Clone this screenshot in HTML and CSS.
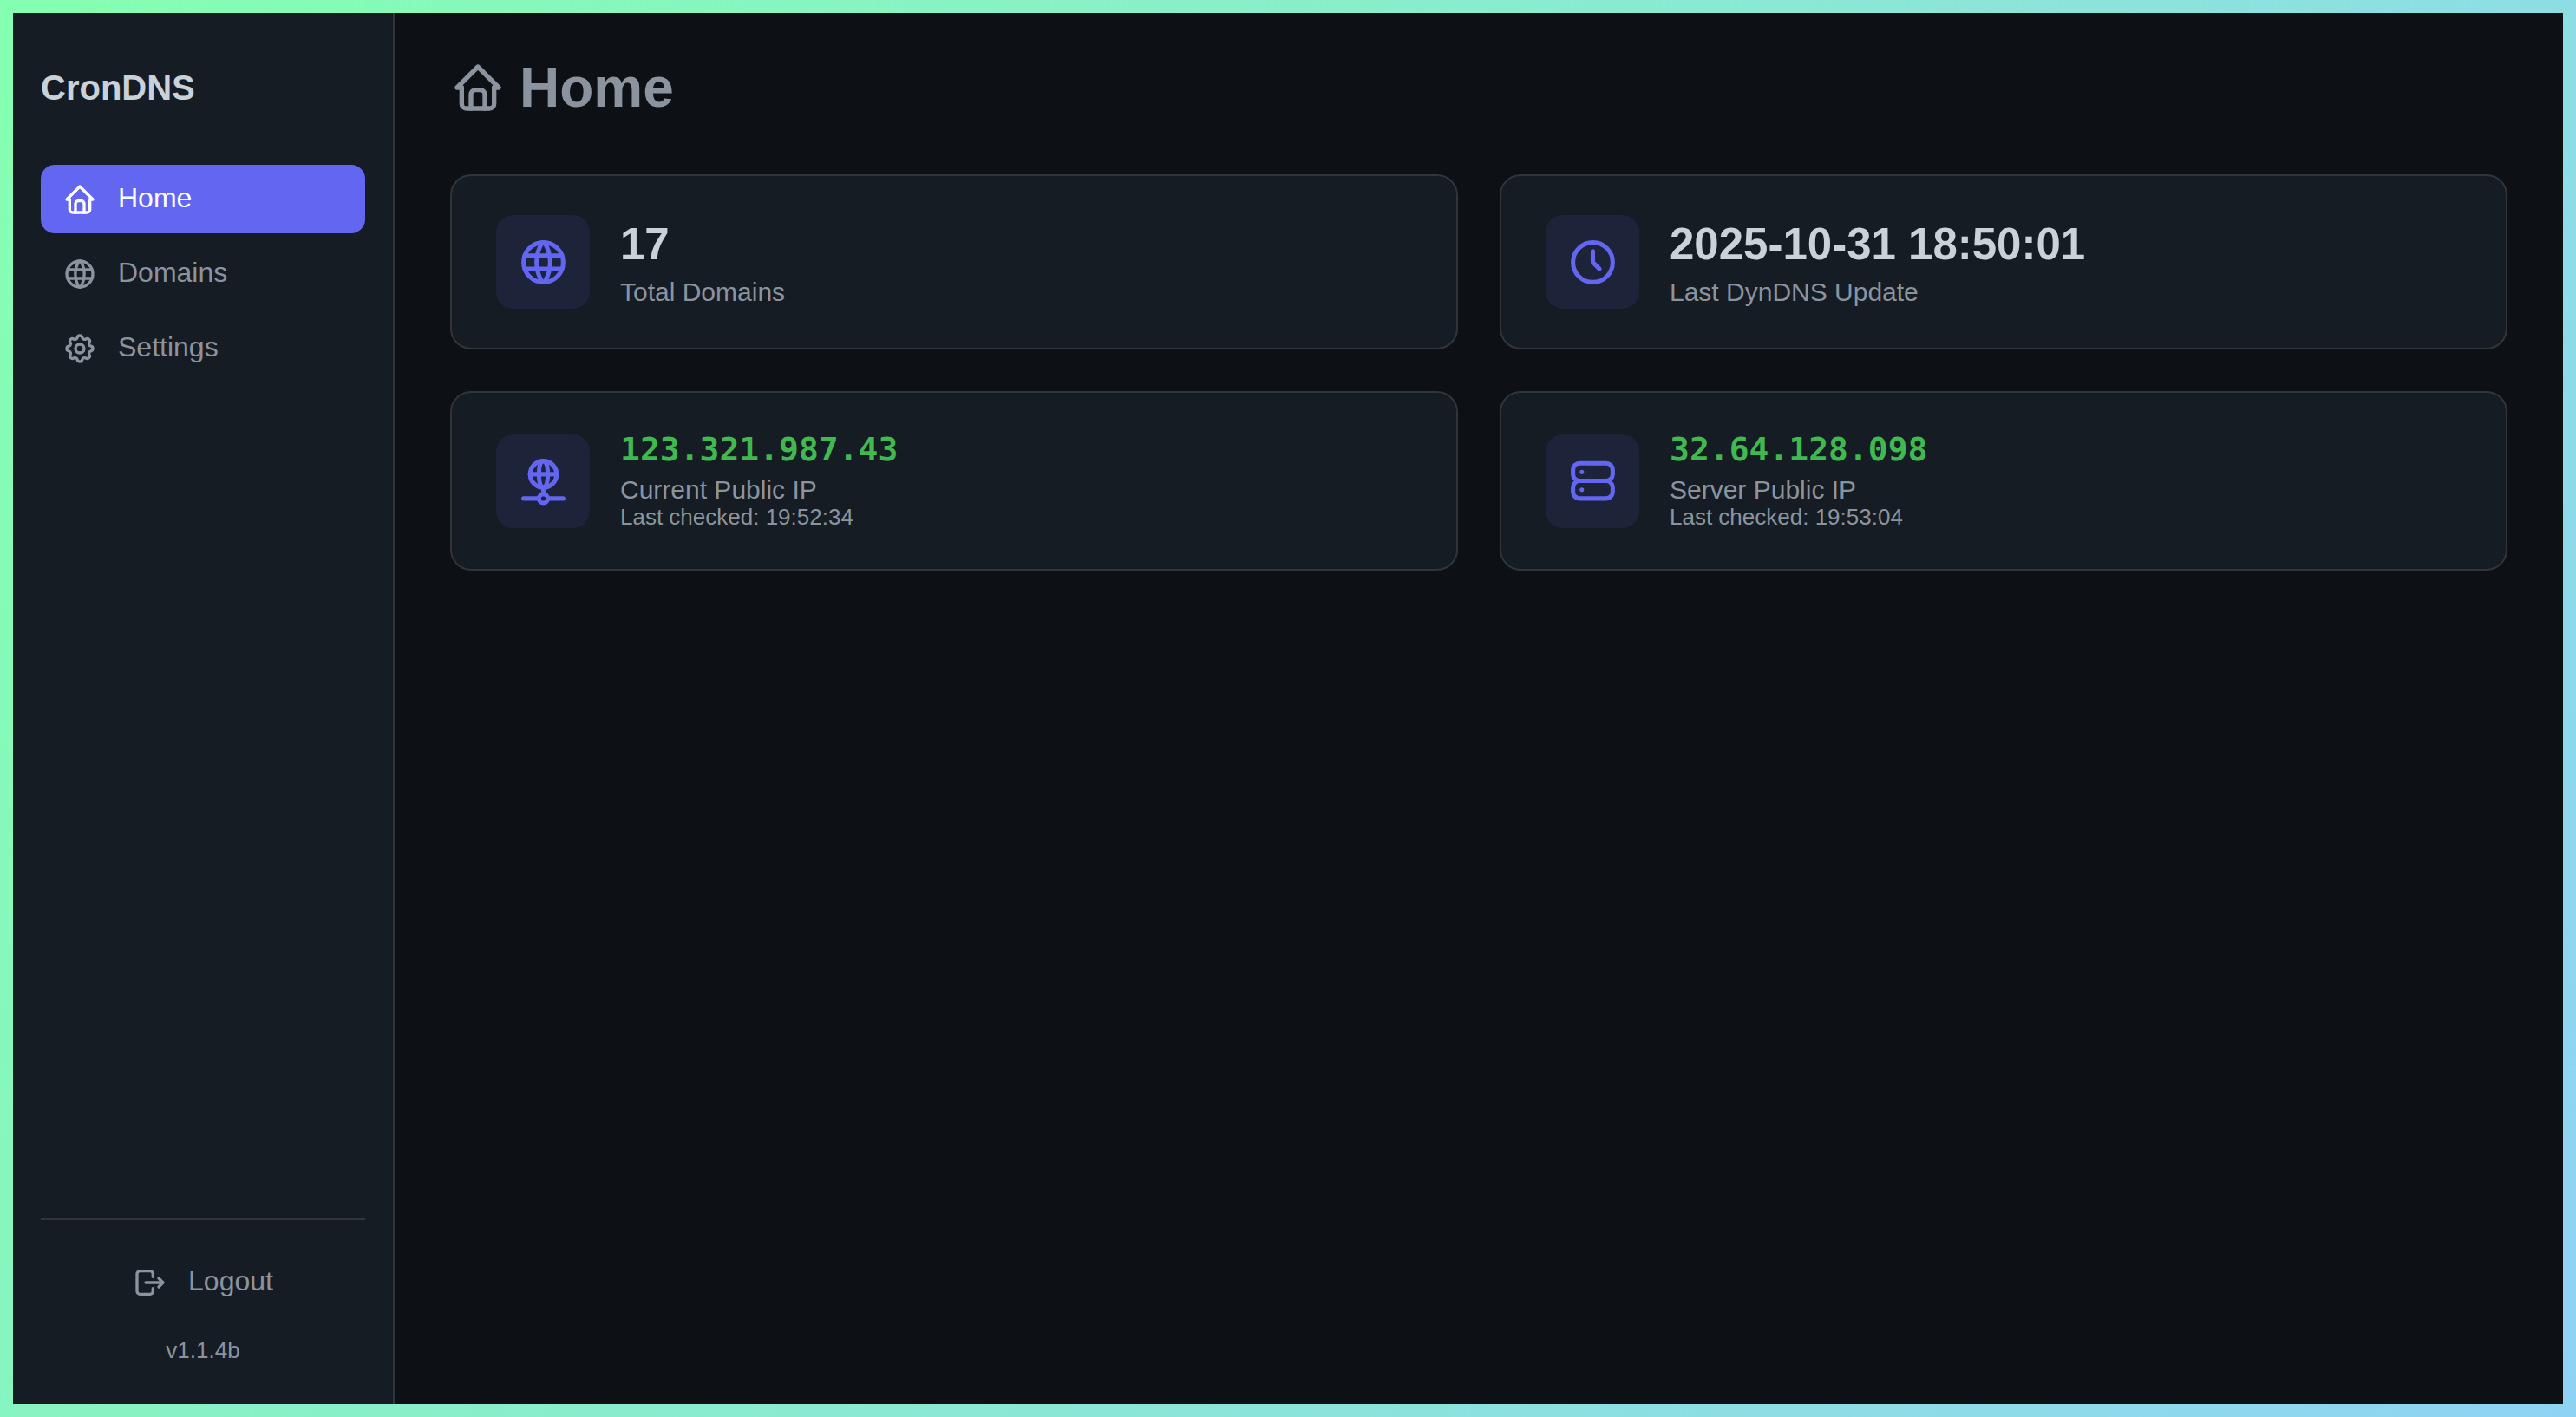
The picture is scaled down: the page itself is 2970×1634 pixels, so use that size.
FILE: index.html
```html
<!DOCTYPE html>
<html lang="en">
<head>
<meta charset="utf-8">
<meta name="viewport" content="width=device-width, initial-scale=1">
<title>CronDNS</title>
<link rel="stylesheet" href="styles.css">
</head>
<body>
<div class="app">
  <aside class="sidebar">
    <div class="brand">CronDNS</div>
    <nav class="nav">
      <a class="nav-link active" href="#home">
        <svg class="icon" viewBox="0 0 24 24" aria-hidden="true"><path d="M5 12H3l9-9 9 9h-2"/><path d="M5 12v7a2 2 0 0 0 2 2h10a2 2 0 0 0 2-2v-7"/><path d="M9 21v-6a2 2 0 0 1 2-2h2a2 2 0 0 1 2 2v6"/></svg>
        <span class="nav-text">Home</span>
      </a>
      <a class="nav-link" href="#domains">
        <svg class="icon" viewBox="0 0 24 24" aria-hidden="true"><circle cx="12" cy="12" r="9"/><path d="M3.6 9h16.8M3.6 15h16.8M11.5 3a17 17 0 0 0 0 18M12.5 3a17 17 0 0 1 0 18"/></svg>
        <span class="nav-text">Domains</span>
      </a>
      <a class="nav-link" href="#settings">
        <svg class="icon" viewBox="0 0 24 24" aria-hidden="true"><path d="M10.325 4.317c.426-1.756 2.924-1.756 3.35 0a1.724 1.724 0 0 0 2.573 1.066c1.543-.94 3.31.826 2.37 2.37a1.724 1.724 0 0 0 1.065 2.572c1.756.426 1.756 2.924 0 3.35a1.724 1.724 0 0 0-1.066 2.573c.94 1.543-.826 3.31-2.37 2.37a1.724 1.724 0 0 0-2.572 1.065c-.426 1.756-2.924 1.756-3.35 0a1.724 1.724 0 0 0-2.573-1.066c-1.543.94-3.31-.826-2.37-2.37a1.724 1.724 0 0 0-1.065-2.572c-1.756-.426-1.756-2.924 0-3.35a1.724 1.724 0 0 0 1.066-2.573c-.94-1.543.826-3.31 2.37-2.37 1 .608 2.296.07 2.572-1.065z"/><circle cx="12" cy="12" r="3"/></svg>
        <span class="nav-text">Settings</span>
      </a>
    </nav>
    <div class="sidebar-footer">
      <a class="nav-link logout" href="#logout">
        <svg class="icon" viewBox="0 0 24 24" aria-hidden="true"><path d="M14 8V6a2 2 0 0 0-2-2H5a2 2 0 0 0-2 2v12a2 2 0 0 0 2 2h7a2 2 0 0 0 2-2v-2"/><path d="M9 12h12l-3-3M18 15l3-3"/></svg>
        <span class="nav-text">Logout</span>
      </a>
      <div class="version">v1.1.4b</div>
    </div>
  </aside>

  <main class="main">
    <h1 class="page-title">
      <svg class="icon icon-title" viewBox="0 0 24 24" aria-hidden="true"><path d="M5 12H3l9-9 9 9h-2"/><path d="M5 12v7a2 2 0 0 0 2 2h10a2 2 0 0 0 2-2v-7"/><path d="M9 21v-6a2 2 0 0 1 2-2h2a2 2 0 0 1 2 2v6"/></svg>
      <span>Home</span>
    </h1>

    <div class="cards">
      <section class="card">
        <div class="tile">
          <svg class="icon icon-tile" viewBox="0 0 24 24" aria-hidden="true"><circle cx="12" cy="12" r="9"/><path d="M3.6 9h16.8M3.6 15h16.8M11.5 3a17 17 0 0 0 0 18M12.5 3a17 17 0 0 1 0 18"/></svg>
        </div>
        <div class="info">
          <div class="value">17</div>
          <div class="label">Total Domains</div>
        </div>
      </section>

      <section class="card">
        <div class="tile">
          <svg class="icon icon-tile" viewBox="0 0 24 24" aria-hidden="true"><circle cx="12" cy="12" r="9"/><path d="M12 7v5l3 3"/></svg>
        </div>
        <div class="info">
          <div class="value">2025-10-31 18:50:01</div>
          <div class="label">Last DynDNS Update</div>
        </div>
      </section>

      <section class="card">
        <div class="tile">
          <svg class="icon icon-tile" viewBox="0 0 24 24" aria-hidden="true"><circle cx="12" cy="9" r="6"/><path d="M12 3c1.333.333 2 2.333 2 6s-.667 5.667-2 6M12 3c-1.333.333-2 2.333-2 6s.667 5.667 2 6M6 9h12M3 20h7M14 20h7M12 15v3"/><circle cx="12" cy="20" r="2"/></svg>
        </div>
        <div class="info">
          <div class="value ip">123.321.987.43</div>
          <div class="label">Current Public IP</div>
          <div class="checked">Last checked: 19:52:34</div>
        </div>
      </section>

      <section class="card">
        <div class="tile">
          <svg class="icon icon-tile" viewBox="0 0 24 24" aria-hidden="true"><rect x="3" y="4" width="18" height="8" rx="3"/><rect x="3" y="12" width="18" height="8" rx="3"/><path d="M7 8v.01M7 16v.01"/></svg>
        </div>
        <div class="info">
          <div class="value ip">32.64.128.098</div>
          <div class="label">Server Public IP</div>
          <div class="checked">Last checked: 19:53:04</div>
        </div>
      </section>
    </div>
  </main>
</div>
</body>
</html>
```

FILE: styles.css
```css
:root {
  --bg: #0d1014;
  --surface: #161c23;
  --border: #30353a;
  --text: #c9d1d9;
  --muted: #8b949e;
  --accent: #6366f1;
  --success: #3fb950;
}

*,
*::before,
*::after {
  box-sizing: border-box;
}

body {
  display: flex;
  min-height: 100vh;
  margin: 0;
  padding: 15px;
  background: linear-gradient(120deg, #84ffb0, #8fd3f4);
  color: var(--text);
  font-family: "Liberation Sans", Arial, sans-serif;
  font-size: 32px;
}

.app {
  display: flex;
  flex: 1;
  background: var(--bg);
}

.icon {
  flex: none;
  width: 40px;
  height: 40px;
  fill: none;
  stroke: currentColor;
  stroke-width: 2;
  stroke-linecap: round;
  stroke-linejoin: round;
}

.icon-title {
  width: 64px;
  height: 64px;
}

.icon-tile {
  width: 61px;
  height: 61px;
}

/* Sidebar */

.sidebar {
  display: flex;
  flex: none;
  flex-direction: column;
  width: 440px;
  padding: 62px 32px 47px;
  background: var(--surface);
  border-right: 2px solid var(--border);
}

.brand {
  margin-bottom: 65px;
  font-size: 40px;
  font-weight: 700;
  line-height: 48px;
}

.nav {
  display: flex;
  flex-direction: column;
  gap: 7px;
}

.nav-link {
  display: flex;
  align-items: center;
  gap: 24px;
  padding: 19px 25px;
  border-radius: 16px;
  color: var(--muted);
  line-height: 38px;
  text-decoration: none;
}

.nav-text {
  padding-bottom: 3px;
}

.nav-link.active {
  background: var(--accent);
  color: #fff;
}

.sidebar-footer {
  margin-top: auto;
  padding-top: 32px;
  border-top: 2px solid var(--border);
}

.logout {
  justify-content: center;
}

.version {
  margin-top: 24px;
  color: var(--muted);
  font-size: 26px;
  line-height: 30px;
  text-align: center;
}

/* Main column */

.main {
  flex: 1;
  min-width: 0;
  padding: 49px 64px;
}

.page-title {
  display: flex;
  align-items: center;
  gap: 16px;
  margin: 0 0 63px;
  color: var(--muted);
  font-size: 64px;
  font-weight: 700;
  line-height: 74px;
}

.cards {
  display: grid;
  grid-template-columns: repeat(2, minmax(0, 1fr));
  gap: 48px;
}

.card {
  display: flex;
  align-items: center;
  gap: 35px;
  padding: 45px 51px;
  background: var(--surface);
  border: 2px solid var(--border);
  border-radius: 24px;
}

.tile {
  display: flex;
  flex: none;
  align-items: center;
  justify-content: center;
  width: 108px;
  height: 108px;
  border-radius: 20px;
  background: rgba(99, 102, 241, 0.1);
  color: var(--accent);
}

.value {
  margin-bottom: 7px;
  font-size: 51px;
  font-weight: 700;
  line-height: 61px;
}

.value.ip {
  margin-bottom: 9px;
  color: var(--success);
  font-family: "DejaVu Sans Mono", Menlo, monospace;
  font-size: 38px;
  line-height: 40px;
}

.label {
  color: var(--muted);
  font-size: 30px;
  line-height: 35px;
}

.checked {
  color: var(--muted);
  font-size: 26px;
  line-height: 29px;
}
```
